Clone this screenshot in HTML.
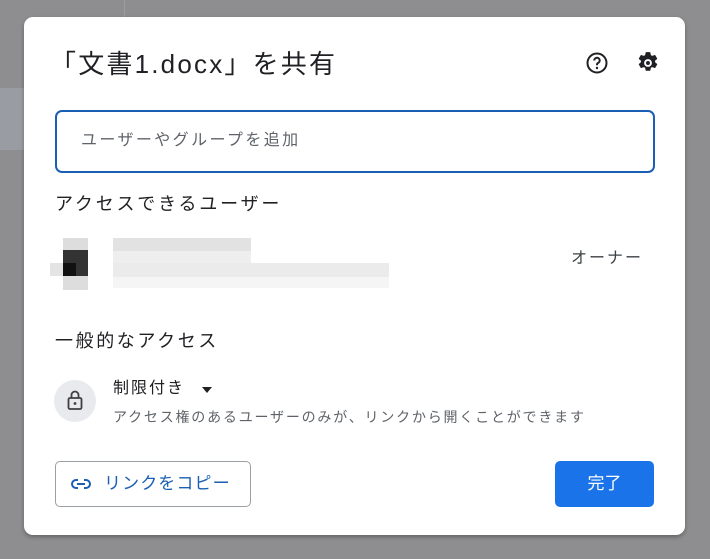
<!DOCTYPE html>
<html><head><meta charset="utf-8"><style>
*{margin:0;padding:0;box-sizing:border-box}
body{width:710px;height:559px;background:#8e8e90;position:relative;overflow:hidden;font-family:"Liberation Sans","Noto Sans CJK JP",sans-serif;color:#202124}
.a{position:absolute;white-space:nowrap}
.dlg{position:absolute;left:24px;top:17px;width:661px;height:518px;background:#fff;border-radius:9px;box-shadow:0 2px 4px rgba(0,0,0,.3)}
.px{position:absolute}
</style></head><body>
<div class="a" style="left:0;top:88px;width:24px;height:62px;background:#9a9ca3"></div>
<div class="a" style="left:124px;top:0;width:1px;height:17px;background:#9c9c9e"></div>
<div class="dlg"></div>
<div class="a" style="left:50px;top:46px;font-size:26px;line-height:36px;letter-spacing:2.2px">「文書1.docx」を共有</div>
<svg class="a" style="left:585px;top:51px" width="24" height="24" viewBox="0 0 24 24"><circle cx="12" cy="12" r="9.5" fill="none" stroke="#202124" stroke-width="2"/><path d="M9.3 9.5a2.7 2.7 0 1 1 3.9 2.4c-.8.4-1.2.9-1.2 1.8v.5" fill="none" stroke="#202124" stroke-width="2"/><circle cx="12" cy="17" r="1.2" fill="#202124"/></svg>
<svg class="a" style="left:635px;top:50px" width="26" height="26" viewBox="0 0 24 24"><path fill="#202124" stroke="#202124" stroke-width="1" stroke-linejoin="round" d="M10.3 2.5h3.4l.5 2.6 1.6.9 2.5-.9 1.7 2.9-2 1.7v1.8l2 1.7-1.7 2.9-2.5-.9-1.6.9-.5 2.6h-3.4l-.5-2.6-1.6-.9-2.5.9-1.7-2.9 2-1.7v-1.8l-2-1.7 1.7-2.9 2.5.9 1.6-.9z"/><circle cx="12" cy="12" r="3.6" fill="#fff"/><circle cx="12" cy="12" r="1.8" fill="#202124"/></svg>
<div class="a" style="left:55px;top:110px;width:600px;height:63px;border:2px solid #1a5fb4;border-radius:7px"></div>
<div class="a" style="left:81px;top:130px;font-size:16px;color:#5f6368;line-height:22px;letter-spacing:2.4px">ユーザーやグループを追加</div>
<div class="a" style="left:55px;top:191px;font-size:18px;line-height:26px;letter-spacing:2.8px">アクセスできるユーザー</div>
<div class="px" style="left:63px;top:238px;width:25px;height:52px;background:#ddd"></div>
<div class="px" style="left:63px;top:250px;width:25px;height:26px;background:#333"></div>
<div class="px" style="left:63px;top:263px;width:13px;height:13px;background:#111"></div>
<div class="px" style="left:50px;top:263px;width:13px;height:13px;background:#e4e4e4"></div>
<div class="px" style="left:113px;top:238px;width:138px;height:13px;background:#e2e2e2"></div>
<div class="px" style="left:113px;top:251px;width:138px;height:26px;background:#eeeeee"></div>
<div class="px" style="left:113px;top:263px;width:276px;height:14px;background:#ebebeb"></div>
<div class="px" style="left:113px;top:277px;width:276px;height:11px;background:#f5f5f5"></div>
<div class="a" style="left:571px;top:248px;font-size:16px;color:#3c4043;line-height:22px;letter-spacing:2px">オーナー</div>
<div class="a" style="left:55px;top:328px;font-size:18px;line-height:26px;letter-spacing:2.6px">一般的なアクセス</div>
<div class="a" style="left:54px;top:380px;width:42px;height:42px;border-radius:50%;background:#e8eaed"></div>
<svg class="a" style="left:64px;top:388px" width="22" height="24" viewBox="0 0 22 24"><rect x="4.5" y="10" width="13" height="11" rx="1.5" fill="none" stroke="#3c4043" stroke-width="1.8"/><path d="M7.5 10V7a3.5 3.5 0 0 1 7 0v3" fill="none" stroke="#3c4043" stroke-width="1.8"/><circle cx="11" cy="15.5" r="1.4" fill="#3c4043"/></svg>
<div class="a" style="left:113px;top:378px;font-size:16px;line-height:22px;letter-spacing:2px">制限付き</div>
<svg class="a" style="left:200px;top:385px" width="14" height="10"><path d="M2 2h10l-5 6z" fill="#202124"/></svg>
<div class="a" style="left:113px;top:407px;font-size:14px;color:#5f6368;line-height:20px;letter-spacing:1.8px">アクセス権のあるユーザーのみが、リンクから開くことができます</div>
<div class="a" style="left:55px;top:461px;width:196px;height:46px;border:1px solid #9aa0a6;border-radius:5px"></div>
<svg class="a" style="left:70px;top:475px" width="22" height="18" viewBox="0 0 22 18"><path d="M8 5H6a4 4 0 0 0 0 8h2M14 5h2a4 4 0 0 1 0 8h-2M7 9h8" fill="none" stroke="#1a5fb4" stroke-width="2"/></svg>
<div class="a" style="left:104px;top:472px;font-size:17px;color:#1a5fb4;line-height:24px;letter-spacing:1.1px">リンクをコピー</div>
<div class="a" style="left:555px;top:461px;width:99px;height:46px;background:#1a73e8;border-radius:5px;color:#fff;font-size:17px;line-height:46px;text-align:center">完了</div>
</body></html>
